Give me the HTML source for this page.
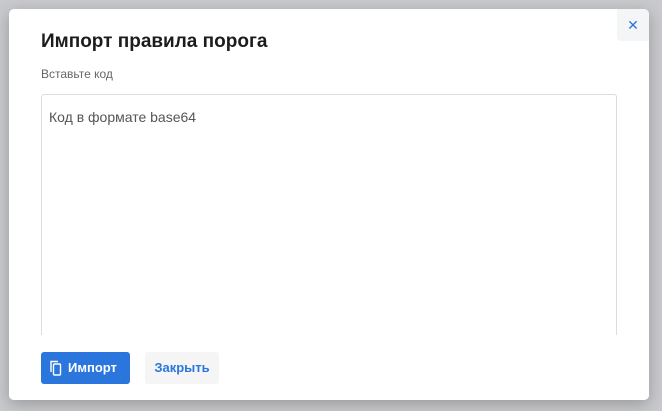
<!DOCTYPE html>
<html><head><meta charset="utf-8"><style>
*{box-sizing:border-box;margin:0;padding:0}
body{width:662px;height:411px;background:#c9cacd;font-family:"Liberation Sans","DejaVu Sans",sans-serif;position:relative;overflow:hidden}
.modal{position:absolute;left:9px;top:9px;width:640px;height:391px;background:#fff;border-radius:5px;box-shadow:0 4px 16px rgba(0,0,0,.25);overflow:hidden}
.close{position:absolute;right:0;top:0;width:32px;height:32px;background:#f4f5f7;border-bottom-left-radius:4px;color:#2a76dd;font-size:14px;text-align:center;line-height:32px}
h1{position:absolute;left:32px;top:22px;font-size:19px;font-weight:bold;color:#1c1c1c}
.lbl{position:absolute;left:32px;top:58px;font-size:12px;color:#666}
.ta{position:absolute;left:32px;top:85px;width:576px;height:260px;border:1px solid #dcdcdc;border-radius:3px;padding:14px 7px;font-size:14px;color:#555}
.fill{position:absolute;left:0;top:326px;width:640px;height:65px;background:#fff}
.b1{position:absolute;left:32px;top:343px;width:89px;height:32px;background:#2a76dd;border-radius:3px;color:#fff;font-weight:bold;font-size:13px;line-height:32px;padding-left:27px}
.b2{position:absolute;left:136px;top:343px;width:74px;height:32px;background:#f5f5f5;border-radius:3px;color:#2a76dd;font-weight:bold;font-size:13px;line-height:32px;text-align:center}
</style></head><body>
<div class="modal">
<div class="close">✕</div>
<h1>Импорт правила порога</h1>
<div class="lbl">Вставьте код</div>
<div class="ta">Код в формате base64</div>
<div class="fill"></div>
<div class="b1"><svg style="position:absolute;left:8px;top:8px" width="14" height="16" viewBox="0 0 14 16" fill="none" stroke="#fff" stroke-width="1.4"><path d="M2 12V1.5H9"/><rect x="4.5" y="4" width="7" height="11" rx="1"/></svg>Импорт</div>
<div class="b2">Закрыть</div>
</div>
</body></html>
